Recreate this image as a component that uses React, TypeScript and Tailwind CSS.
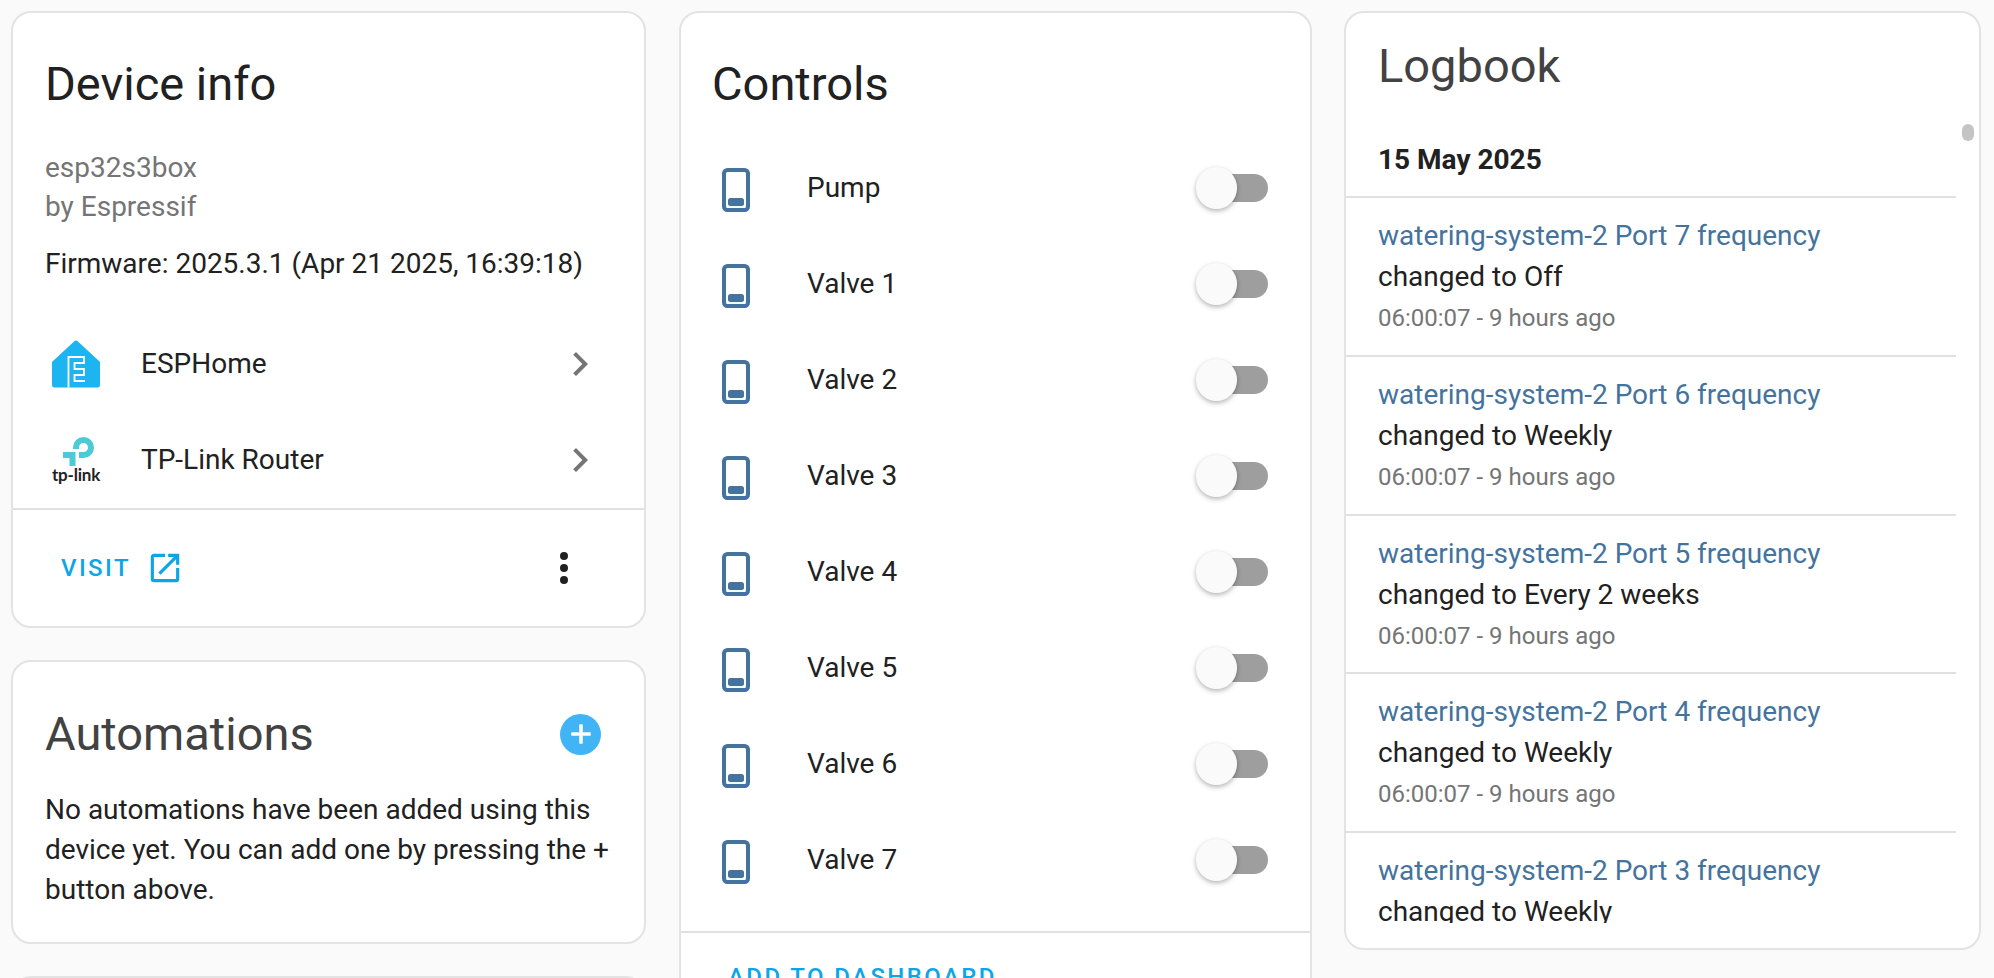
import React from "react";

const Chevron = () => (
  <svg viewBox="0 0 24 24" className="w-[48px] h-[48px] fill-[#757575]">
    <path d="M8.59,16.58L13.17,12L8.59,7.41L10,6L16,12L10,18L8.59,16.58Z" />
  </svg>
);

const EspHome = () => (
  <svg viewBox="0 0 48 48" className="w-[48px] h-[48px]">
    <path d="M24 0.5 a2.4 2.4 0 0 1 1.7 .7 L47 21 a2.4 2.4 0 0 1 1 2 V45 a2.5 2.5 0 0 1 -2.5 2.5 H2.5 A2.5 2.5 0 0 1 0 45 V23 a2.4 2.4 0 0 1 1 -2 L22.3 1.2 a2.4 2.4 0 0 1 1.7 -.7 Z" fill="#1cb5f2" />
    <path d="M16.5 47.5 V17 H32 V23 H22.5 V29 H32 V35 H22.5 V41 H33" fill="none" stroke="#fff" strokeWidth="1.8" />
  </svg>
);

const TpLink = () => (
  <div className="w-[48px] flex flex-col items-center">
    <svg viewBox="0 0 31 29" className="w-[31px] h-[29px] ml-[4px]">
      <path d="M10 12 V10.5 A10.5 10.5 0 1 1 20.5 21 H16 V15 H20.5 A4.5 4.5 0 1 0 16 10.5 V12 Z" fill="#4acbd6" />
      <path d="M0 15 H12.5 V29 H6.5 V21 H0 Z" fill="#4acbd6" />
    </svg>
    <span className="whitespace-nowrap text-[17px] leading-[18px] font-bold text-[#222] font-['Lato',sans-serif] tracking-[-0.2px]">tp-link</span>
  </div>
);

const Card = ({ className, children }: { className: string; children: React.ReactNode }) => (
  <div className={"bg-white rounded-[20px] border-2 border-[#e3e3e3] overflow-hidden flex flex-col " + className}>{children}</div>
);

const Device = () => (
  <svg viewBox="0 0 28 44" className="w-[28px] h-[44px]">
    <rect x="2" y="2" width="24" height="40" rx="3.5" fill="none" stroke="#44739e" strokeWidth="4" />
    <rect x="6" y="30" width="16" height="8" rx="2.5" fill="#44739e" />
  </svg>
);

const Toggle = () => (
  <div className="relative w-[72px] h-[42px] -translate-y-[2px] flex items-center justify-end">
    <div className="w-[64px] h-[28px] rounded-full bg-[#9e9e9e]" />
    <div className="absolute left-0 top-0 w-[41px] h-[42px] rounded-full bg-[#fafafa] shadow-[0_2px_5px_rgba(0,0,0,0.3)]" />
  </div>
);

const controls = ["Pump", "Valve 1", "Valve 2", "Valve 3", "Valve 4", "Valve 5", "Valve 6", "Valve 7"];

const logs = [
  ["7", "Off"],
  ["6", "Weekly"],
  ["5", "Every 2 weeks"],
  ["4", "Weekly"],
  ["3", "Weekly"],
];

export default function App() {
  return (
    <div className="h-[978px] w-[1994px] overflow-hidden bg-[#fafafa] font-['Roboto',sans-serif] text-[#212121] text-[28px] flex items-start pl-[11px] pt-[11px]">
      <div className="w-[635px] flex flex-col gap-[32px] shrink-0">
        <Card className="h-[617px]">
          <div className="px-[32px] pt-[43px]">
            <h1 className="text-[47px] leading-[56px]">Device info</h1>
            <div className="mt-[36px] text-[#757575] leading-[39px]">
              <div>esp32s3box</div>
              <div>by Espressif</div>
            </div>
            <div className="mt-[18px] leading-[39px] whitespace-nowrap">Firmware: 2025.3.1 (Apr 21 2025, 16:39:18)</div>
          </div>
          <div className="mt-[33px] h-[192px] flex flex-col">
            {[["ESPHome", <EspHome key="e" />], ["TP-Link Router", <TpLink key="t" />]].map(([name, logo], i) => (
              <div key={i} className="h-[96px] flex items-center pl-[39px] pr-[40px]">
                <div className="w-[48px] flex justify-center">{logo}</div>
                <span className="ml-[41px] flex-1">{name}</span>
                <Chevron />
              </div>
            ))}
          </div>
          <div className="flex-1 border-t-2 border-[#e0e0e0] flex items-center pl-[48px] pr-[56px]">
            <span className="text-[#0ca6e8] text-[24px] font-medium tracking-[2.4px]">VISIT</span>
            <svg viewBox="0 0 24 24" className="ml-[15px] w-[38px] h-[38px] fill-[#0ca6e8]">
              <path d="M14,3V5H17.59L7.76,14.83L9.17,16.24L19,6.41V10H21V3M19,19H5V5H12V3H5C3.89,3 3,3.9 3,5V19A2,2 0 0,0 5,21H19A2,2 0 0,0 21,19V12H19V19Z" />
            </svg>
            <svg viewBox="0 0 24 24" className="ml-auto w-[48px] h-[48px] fill-[#212121]">
              <path d="M12,16A2,2 0 0,1 14,18A2,2 0 0,1 12,20A2,2 0 0,1 10,18A2,2 0 0,1 12,16M12,10A2,2 0 0,1 14,12A2,2 0 0,1 12,14A2,2 0 0,1 10,12A2,2 0 0,1 12,10M12,4A2,2 0 0,1 14,6A2,2 0 0,1 12,8A2,2 0 0,1 10,6A2,2 0 0,1 12,4Z" />
            </svg>
          </div>
        </Card>
        <Card className="h-[284px]">
          <div className="pl-[32px] pr-[2px] pt-[44px]">
            <div className="flex items-center justify-between pr-[41px]">
              <h2 className="text-[47px] leading-[56px] text-[#424242]">Automations</h2>
              <div className="w-[41px] h-[41px] rounded-full bg-[#41b4f5] flex items-center justify-center">
                <svg viewBox="0 0 24 24" className="w-[32px] h-[32px] fill-white">
                  <path d="M19,13H13V19H11V13H5V11H11V5H13V11H19V13Z" stroke="#fff" strokeWidth="0.6" />
                </svg>
              </div>
            </div>
            <p className="mt-[28px] leading-[40px]">No automations have been added using this device yet. You can add one by pressing the + button above.</p>
          </div>
        </Card>
        <Card className="h-[100px]"><span /></Card>
      </div>

      <Card className="ml-[33px] w-[633px] h-[1100px] shrink-0">
        <div className="px-[31px] pt-[43px]">
          <h1 className="text-[47px] leading-[56px]">Controls</h1>
        </div>
        <div className="mt-[30px] flex flex-col">
          {controls.map((c) => (
            <div key={c} className="h-[96px] flex items-center pl-[41px] pr-[42px]">
              <Device />
              <span className="ml-[57px] flex-1 -translate-y-[2px]">{c}</span>
              <Toggle />
            </div>
          ))}
        </div>
        <div className="mt-[21px] border-t-2 border-[#e0e0e0] pt-[28px] pl-[47px]">
          <span className="block text-[#0ca6e8] text-[24px] leading-[32px] font-medium tracking-[2.4px]">ADD TO DASHBOARD</span>
        </div>
      </Card>

      <Card className="ml-[32px] w-[637px] h-[939px] shrink-0 relative">
        <div className="px-[32px] pt-[25px]">
          <h2 className="text-[47px] leading-[56px] text-[#424242]">Logbook</h2>
        </div>
        <div className="absolute right-[5px] top-[111px] w-[12px] h-[17px] rounded-full bg-[#c4c4c4]" />
        <div className="h-[829px] mr-[23px] overflow-hidden">
          <div className="h-[104px] pt-[46px] px-[32px] font-bold border-b-2 border-[#e0e0e0] leading-[40px]">15 May 2025</div>
          {logs.map(([n, v]) => (
            <div key={n} className="h-[158.8px] border-b-2 border-[#e0e0e0] px-[32px] pt-[18px]">
              <div className="text-[#44739e] leading-[40px]">watering-system-2 Port {n} frequency</div>
              <div className="leading-[42px]">changed to {v}</div>
              <div className="text-[#757575] text-[24px] leading-[40px]">06:00:07 - 9 hours ago</div>
            </div>
          ))}
        </div>
      </Card>
    </div>
  );
}
